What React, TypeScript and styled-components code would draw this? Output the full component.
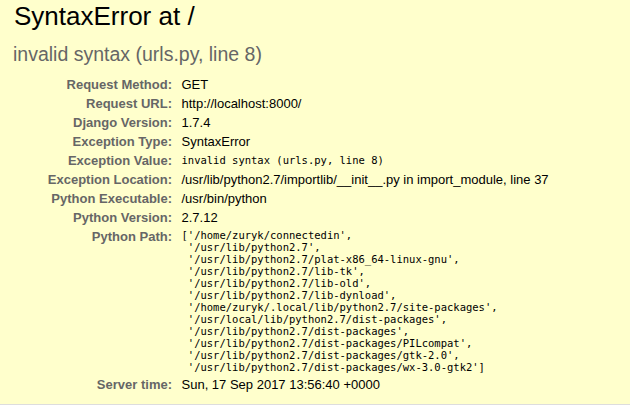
import React from "react";
import styled, { createGlobalStyle } from "styled-components";

const Global = createGlobalStyle`
  html, body { margin: 0; padding: 0; background: #fff; }
  body { font: 13px "Liberation Sans", Arial, sans-serif; color: #000; }
`;

const Summary = styled.div`
  background: #ffc;
  border-bottom: 1px solid #ddd;
  padding: 1px 20px 10px 13px;
`;

const Title = styled.h1`
  margin: 0 0 0 1px;
  font-size: 26px;
  font-weight: normal;
  line-height: normal;
`;

const ExceptionValue = styled.pre`
  font-family: "Liberation Sans", Arial, sans-serif;
  color: #666;
  font-size: 19.5px;
  margin: 11px 0 9px 0;
  white-space: pre-wrap;
`;

const Meta = styled.table`
  border: none;
  border-collapse: collapse;
  background: transparent;
`;

const Label = styled.th`
  width: 156px;
  text-align: right;
  vertical-align: top;
  color: #666;
  font-weight: bold;
  padding: 2px 6.5px 2px 3px;
`;

const Value = styled.td`
  vertical-align: top;
  padding: 2px 3px;
`;

const Mono = styled.pre<{ $block?: boolean }>`
  margin: 0;
  font-family: "DejaVu Sans Mono", monospace;
  font-size: 10.5px;
  white-space: pre-wrap;
  ${(p) => (p.$block ? "" : "padding-top: 1px;")}
`;

const paths = `['/home/zuryk/connectedin',
 '/usr/lib/python2.7',
 '/usr/lib/python2.7/plat-x86_64-linux-gnu',
 '/usr/lib/python2.7/lib-tk',
 '/usr/lib/python2.7/lib-old',
 '/usr/lib/python2.7/lib-dynload',
 '/home/zuryk/.local/lib/python2.7/site-packages',
 '/usr/local/lib/python2.7/dist-packages',
 '/usr/lib/python2.7/dist-packages',
 '/usr/lib/python2.7/dist-packages/PILcompat',
 '/usr/lib/python2.7/dist-packages/gtk-2.0',
 '/usr/lib/python2.7/dist-packages/wx-3.0-gtk2']`;

const rows: [string, React.ReactNode][] = [
  ["Request Method:", "GET"],
  ["Request URL:", "http://localhost:8000/"],
  ["Django Version:", "1.7.4"],
  ["Exception Type:", "SyntaxError"],
  ["Exception Value:", <Mono>invalid syntax (urls.py, line 8)</Mono>],
  [
    "Exception Location:",
    "/usr/lib/python2.7/importlib/__init__.py in import_module, line 37",
  ],
  ["Python Executable:", "/usr/bin/python"],
  ["Python Version:", "2.7.12"],
  ["Python Path:", <Mono $block>{paths}</Mono>],
  ["Server time:", "Sun, 17 Sep 2017 13:56:40 +0000"],
];

export default function App() {
  return (
    <>
      <Global />
      <Summary>
        <Title>SyntaxError at /</Title>
        <ExceptionValue>invalid syntax (urls.py, line 8)</ExceptionValue>
        <Meta>
          <tbody>
            {rows.map(([k, v]) => (
              <tr key={k}>
                <Label>{k}</Label>
                <Value>{v}</Value>
              </tr>
            ))}
          </tbody>
        </Meta>
      </Summary>
    </>
  );
}
